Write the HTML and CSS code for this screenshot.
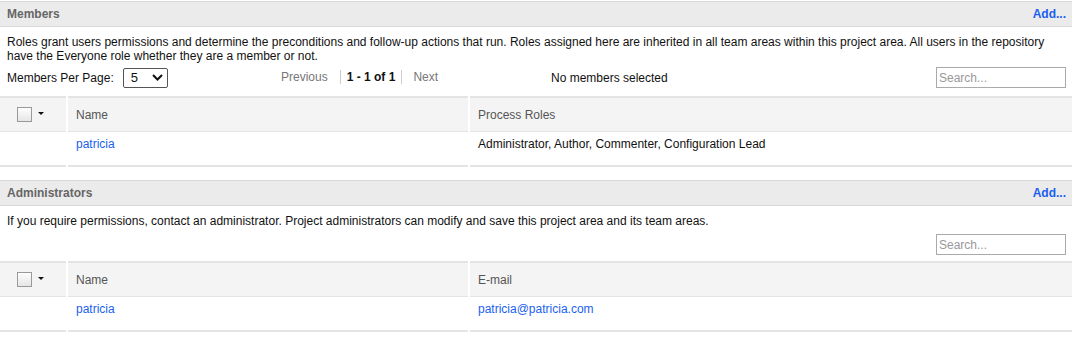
FILE: index.html
```html
<!DOCTYPE html>
<html lang="en">
<head>
    <meta charset="UTF-8">
    <title>Members</title>
    <link rel="stylesheet" href="styles.css">
</head>
<body>
<div class="page">

    <!-- Members -->
    <section class="panel">
        <div class="panel-head">
            <span class="panel-title">Members</span>
            <a class="add-link" href="#">Add...</a>
        </div>
        <p class="desc">Roles grant users permissions and determine the preconditions and follow-up actions that run. Roles assigned here are inherited in all team areas within this project area. All users in the repository have the Everyone role whether they are a member or not.</p>

        <div class="toolbar">
            <div class="per-page">
                <span>Members Per Page:</span>
                <div class="select">
                    <span>5</span>
                    <svg width="11" height="7" viewBox="0 0 11 7"><path d="M1 1 L5.5 5.5 L10 1" fill="none" stroke="#111" stroke-width="2"/></svg>
                </div>
            </div>
            <div class="pager">
                <span class="pager-link">Previous</span>
                <span class="pager-sep"></span>
                <b>1 - 1 of 1</b>
                <span class="pager-sep"></span>
                <span class="pager-link next">Next</span>
            </div>
            <div class="selection">No members selected</div>
            <input class="search" type="text" placeholder="Search...">
        </div>

        <div class="grid">
            <div class="row head">
                <div class="cell check"><span class="checkbox"></span><span class="caret"></span></div>
                <div class="cell">Name</div>
                <div class="cell">Process Roles</div>
            </div>
            <div class="row">
                <div class="cell"></div>
                <div class="cell"><a href="#">patricia</a></div>
                <div class="cell">Administrator, Author, Commenter, Configuration Lead</div>
            </div>
        </div>
    </section>

    <!-- Administrators -->
    <section class="panel">
        <div class="panel-head">
            <span class="panel-title">Administrators</span>
            <a class="add-link" href="#">Add...</a>
        </div>
        <p class="desc">If you require permissions, contact an administrator. Project administrators can modify and save this project area and its team areas.</p>

        <div class="toolbar search-only">
            <input class="search" type="text" placeholder="Search...">
        </div>

        <div class="grid">
            <div class="row head">
                <div class="cell check"><span class="checkbox"></span><span class="caret"></span></div>
                <div class="cell">Name</div>
                <div class="cell">E-mail</div>
            </div>
            <div class="row">
                <div class="cell"></div>
                <div class="cell"><a href="#">patricia</a></div>
                <div class="cell"><a href="#">patricia@patricia.com</a></div>
            </div>
        </div>
    </section>

</div>
</body>
</html>
```

FILE: styles.css
```css
/* base */
body {
    margin: 0;
    font-family: "Liberation Sans", Arial, sans-serif;
    font-size: 12px;
    color: #111;
    background: #fff;
}
a {
    color: #1a5ff0;
    text-decoration: none;
}

.page {
    padding: 1px 6px 0 0;
}

/* panel header */
.panel {
    margin-bottom: 13px;
}
.panel-head {
    display: flex;
    justify-content: space-between;
    align-items: center;
    height: 24px;
    padding: 0 6px 0 7px;
    background: #ebebeb;
    border-top: 1px solid #d9d9d9;
    border-bottom: 1px solid #d9d9d9;
}
.panel-title {
    font-weight: bold;
    color: #666;
}
.add-link {
    font-weight: bold;
}

.desc {
    margin: 8px 0 0;
    padding: 0 7px;
    line-height: 14px;
}

/* toolbar */
.toolbar {
    display: grid;
    grid-template-columns: 274px 270px 1fr auto;
    align-items: center;
    margin: 4px 0 8px;
    padding: 0 6px 0 7px;
}
.toolbar.search-only {
    display: flex;
    justify-content: flex-end;
    margin: 6px 0 6px;
}
.per-page {
    display: flex;
    align-items: center;
    gap: 9px;
}
.select {
    display: flex;
    justify-content: space-between;
    align-items: center;
    box-sizing: border-box;
    width: 45px;
    height: 20px;
    padding: 0 4px 0 7px;
    border: 1px solid #555;
    border-radius: 2px;
    font-size: 13px;
}
.pager {
    display: flex;
    align-items: center;
    gap: 6px;
    margin-top: -2px;
}
.pager-link {
    color: #777;
    margin-right: 6px;
}
.pager-link.next {
    margin: 0 0 0 5px;
}
.pager-sep {
    width: 1px;
    height: 14px;
    background: #ccc;
}
.selection {
    color: #111;
}
.search {
    box-sizing: border-box;
    width: 130px;
    height: 21px;
    margin: 0;
    padding: 0 2px;
    border: 1px solid #aaa;
    border-radius: 0;
    font-family: inherit;
    font-size: 12px;
}
.search::placeholder {
    color: #999;
}

/* table */
.row {
    display: grid;
    grid-template-columns: 66px 400px 1fr;
    column-gap: 2px;
}
.cell {
    padding: 5px 8px 0;
    height: 28px;
    border-bottom: 2px solid #e4e4e4;
}
.row.head .cell {
    display: flex;
    align-items: center;
    padding: 0 8px;
    height: 33px;
    background: #f4f4f4;
    color: #555;
    border-top: 2px solid #e4e4e4;
    border-bottom: 1px solid #e4e4e4;
}
.row.head .cell.check {
    padding-left: 17px;
    gap: 6px;
}
.checkbox {
    box-sizing: border-box;
    width: 15px;
    height: 15px;
    border: 1px solid #999;
    background: linear-gradient(#fdfdfd, #e6e6e6);
}
.caret {
    width: 0;
    height: 0;
    border-left: 3px solid transparent;
    border-right: 3px solid transparent;
    border-top: 3px solid #111;
    margin-top: -3px;
}
```
